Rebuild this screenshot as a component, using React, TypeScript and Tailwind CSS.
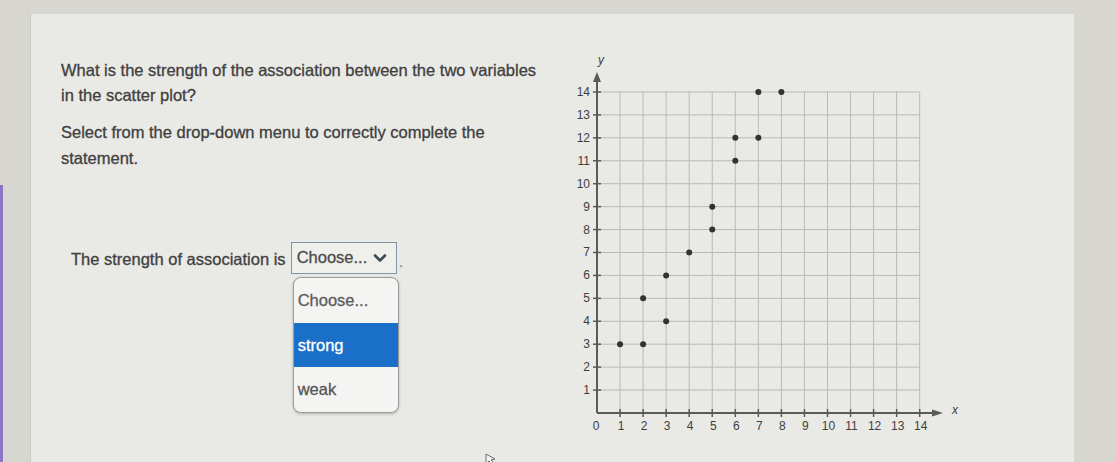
import React from "react";

const UX = 23.05;
const UY = 22.93;
const X0 = 37;
const Y0 = 373;

const points: [number, number][] = [
  [1, 3], [2, 3], [2, 5], [3, 4], [3, 6], [4, 7], [5, 8], [5, 9],
  [6, 11], [6, 12], [7, 12], [7, 14], [8, 14],
];

const ticks = Array.from({ length: 14 }, (_, i) => i + 1);

function ScatterPlot() {
  const px = (v: number) => X0 + v * UX;
  const py = (v: number) => Y0 - v * UY;
  return (
    <svg width="410" height="400" viewBox="0 0 410 400" className="block">
      {/* grid */}
      {ticks.map((t) => (
        <line key={`v${t}`} x1={px(t)} y1={py(14)} x2={px(t)} y2={Y0} stroke="#b9bab6" strokeWidth="1" />
      ))}
      {ticks.map((t) => (
        <line key={`h${t}`} x1={X0} y1={py(t)} x2={px(14)} y2={py(t)} stroke="#b9bab6" strokeWidth="1" />
      ))}
      {/* axes */}
      <line x1={X0} y1={Y0} x2={X0} y2={38} stroke="#5a5a5a" strokeWidth="2" />
      <polygon points={`${X0 - 4},${42} ${X0 + 4},${42} ${X0},${32}`} fill="#5a5a5a" />
      <line x1={X0} y1={Y0} x2={376} y2={Y0} stroke="#5a5a5a" strokeWidth="2" />
      <polygon points={`372,${Y0 - 3.5} 372,${Y0 + 3.5} 383,${Y0}`} fill="#5a5a5a" />
      {/* tick marks */}
      {ticks.map((t) => (
        <line key={`ty${t}`} x1={X0 - 4} y1={py(t)} x2={X0 + 4} y2={py(t)} stroke="#5a5a5a" strokeWidth="1.5" />
      ))}
      {ticks.map((t) => (
        <line key={`tx${t}`} x1={px(t)} y1={Y0 - 4} x2={px(t)} y2={Y0 + 4} stroke="#5a5a5a" strokeWidth="1.5" />
      ))}
      {/* labels */}
      <g fontFamily="'Liberation Sans', Arial, sans-serif" fontSize="12" fill="#3e3e3e">
        {ticks.map((t) => (
          <text key={`ly${t}`} x={X0 - 7} y={py(t) + 4} textAnchor="end">{t}</text>
        ))}
        <text x={X0 - 1} y={Y0 + 17} textAnchor="middle">0</text>
        {ticks.map((t) => (
          <text key={`lx${t}`} x={px(t) + 1} y={Y0 + 17} textAnchor="middle">{t}</text>
        ))}
        <text x={X0 + 4} y={24} fontStyle="italic" fontSize="12" textAnchor="middle">y</text>
        <text x={395} y={Y0 + 1} fontStyle="italic" fontSize="12" textAnchor="middle">x</text>
      </g>
      {/* data */}
      {points.map(([x, y], i) => (
        <circle key={i} cx={px(x)} cy={py(y)} r="3" fill="#333333" />
      ))}
    </svg>
  );
}

function Chevron() {
  return (
    <svg width="14" height="10" viewBox="0 0 14 10" className="block">
      <path d="M2 2.5 L7 7.5 L12 2.5" fill="none" stroke="#3d4a55" strokeWidth="2.6" strokeLinecap="round" strokeLinejoin="round" />
    </svg>
  );
}

export default function App() {
  return (
    <div
      className="relative w-[1115px] h-[462px] overflow-hidden bg-[#d7d6d0] pt-[14px] pl-[30px] pr-[41px] text-[#404040] [-webkit-text-stroke:0.3px]"
      style={{ fontFamily: "'Liberation Sans', Arial, sans-serif" }}
    >
      {/* purple edge of the neighbouring window */}
      <div className="absolute left-0 top-[185px] bottom-0 w-[3px] bg-[#8d74c4]" />
      <div className="h-[448px] flex bg-[#e9e9e5] border-l border-[#cdcdc8]">
        <div className="w-[529px] pl-[30px] pt-[44px] text-[16.5px] leading-[25px]">
          <p className="w-[490px]">What is the strength of the association between the two variables in the scatter plot?</p>
          <p className="mt-[11px] w-[450px] leading-[26px]">Select from the drop-down menu to correctly complete the statement.</p>
          <div className="mt-[70px] pl-[10px] flex items-center">
            <span className="pt-[3px]">The strength of association is</span>
            <div className="relative ml-[5px]">
              <div className="w-[106px] h-[32px] border-[1.5px] border-[#7f95a8] bg-[#efefec] flex items-center justify-between pl-[5px] pr-[9px]">
                <span className="text-[#4c4c4c]">Choose...</span>
                <Chevron />
              </div>
              <div className="absolute left-[2px] top-[35px] w-[106px] h-[136px] rounded-[8px] border border-[#9c9c9c] bg-[#f4f4f2] shadow-[0_1px_3px_rgba(0,0,0,0.25)] overflow-hidden flex flex-col">
                <div className="h-[46px] flex items-center pl-[4px] text-[#5c5c5c]">Choose...</div>
                <div className="h-[45px] flex items-center pl-[4px] bg-[#1a6fc9] text-white">strong</div>
                <div className="h-[45px] flex items-center pl-[4px] text-[#555555]">weak</div>
              </div>
            </div>
            <span className="ml-[2px] pt-[8px] text-[#9a9a9a]">.</span>
          </div>
        </div>
        <div className="pt-[26px]">
          <ScatterPlot />
        </div>
      </div>
      {/* mouse pointer */}
      <svg className="absolute left-[485px] top-[453px]" width="12" height="12" viewBox="0 0 12 12">
        <path d="M1 1 L1 11 L4 8 L7 11 L9 10 L6 7 L10 6 Z" fill="#f2f2f0" stroke="#6a6a6a" strokeWidth="1" />
      </svg>
    </div>
  );
}
